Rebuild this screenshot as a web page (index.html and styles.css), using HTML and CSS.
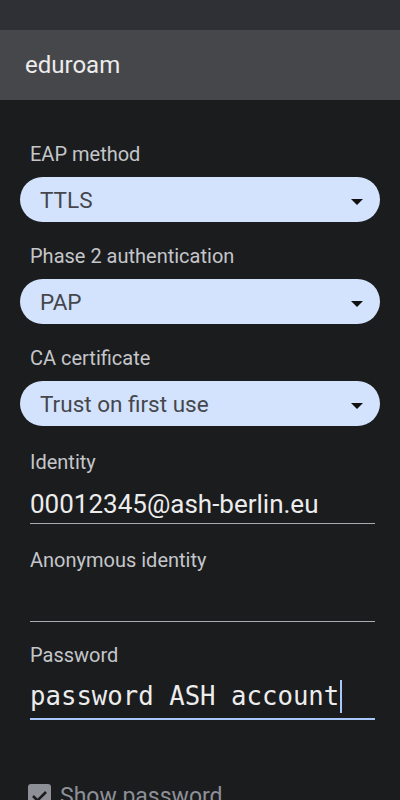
FILE: index.html
```html
<!DOCTYPE html>
<html>
<head>
<meta charset="utf-8">
<link rel="stylesheet" href="styles.css">
</head>
<body>
<div class="status"></div>
<div class="titlebar">eduroam</div>
<div class="content">
  <div class="label first">EAP method</div>
  <div class="spinner"><span>TTLS</span><svg class="arrow" width="12" height="6" viewBox="0 0 12 6"><path d="M0 0H12L6 6Z" fill="#111"/></svg></div>
  <div class="label">Phase 2 authentication</div>
  <div class="spinner"><span>PAP</span><svg class="arrow" width="12" height="6" viewBox="0 0 12 6"><path d="M0 0H12L6 6Z" fill="#111"/></svg></div>
  <div class="label">CA certificate</div>
  <div class="spinner"><span>Trust on first use</span><svg class="arrow" width="12" height="6" viewBox="0 0 12 6"><path d="M0 0H12L6 6Z" fill="#111"/></svg></div>
  <div class="label tlabel">Identity</div>
  <div class="field"><span class="value">00012345@ash-berlin.eu</span></div>
  <div class="label tlabel">Anonymous identity</div>
  <div class="field"><span class="value">&nbsp;</span></div>
  <div class="label tlabel pw">Password</div>
  <div class="field focused"><span class="mono">password ASH account</span><span class="cursor"></span></div>
  <div class="check">
    <span class="box"><svg width="23" height="23" viewBox="0 0 23 23"><path d="M5 12L9.5 16.5L18 8" stroke="#1b1c1e" stroke-width="2.6" fill="none"/></svg></span>
    <span class="checktext">Show password</span>
  </div>
</div>
</body>
</html>
```
FILE: styles.css
```css
html, body {
  margin: 0;
  padding: 0;
  background: #1b1c1e;
  font-family: Roboto, "Noto Sans", sans-serif;
  overflow: hidden;
}
.status {
  height: 30px;
  background: #2e3035;
}
.titlebar {
  height: 70px;
  background: #46474b;
  color: #ececec;
  font-size: 24px;
  line-height: 70px;
  padding-left: 25px;
}
.content {
  padding: 0 20px;
}
.label {
  color: #c4c6ca;
  font-size: 20px;
  line-height: 24px;
  padding-left: 10px;
  margin-top: 22px;
  margin-bottom: 11px;
}
.label.first {
  margin-top: 42px;
}
.label.tlabel {
  margin-top: 24px;
  margin-bottom: 0;
}
.label.pw {
  margin-top: 21px;
}
.spinner {
  height: 45px;
  border-radius: 23px;
  background: #d3e3fd;
  display: flex;
  align-items: center;
  padding: 0 17px 0 20px;
  color: #45474c;
  font-size: 22.5px;
}
.spinner span {
  flex: 1;
}
.arrow {
  margin-top: 5px;
}
.field {
  margin: 0 5px 0 10px;
  border-bottom: 1.5px solid #a9abaf;
  height: 30px;
  padding: 15px 0 4px 0;
  display: flex;
  align-items: flex-end;
  line-height: 30px;
}
.value {
  color: #ececec;
  font-size: 26px;
}
.field.focused {
  border-bottom: 2px solid #a8c7fa;
  height: 36px;
  padding: 11px 0 4px 0;
  align-items: center;
}
.mono {
  font-family: "DejaVu Sans Mono", monospace;
  font-size: 25.7px;
  line-height: 30px;
  color: #ececec;
}
.cursor {
  width: 2px;
  height: 33px;
  background: #a8c7fa;
  margin-left: 1px;
}
.check {
  display: flex;
  align-items: flex-start;
  margin-top: 64px;
  padding-left: 8px;
  gap: 9px;
}
.box {
  width: 23px;
  height: 23px;
  border-radius: 3px;
  background: #8d9097;
  display: flex;
}
.checktext {
  color: #8d9097;
  font-size: 23px;
  line-height: 23px;
  margin-top: 1px;
}
```
